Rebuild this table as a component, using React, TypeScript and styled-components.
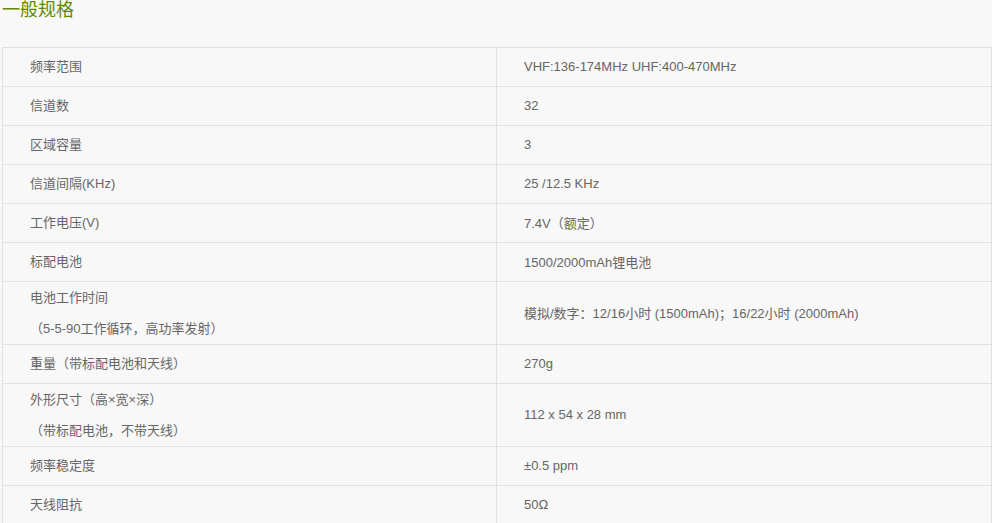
import React from "react";
import styled, { createGlobalStyle } from "styled-components";

const Global = createGlobalStyle`
  html, body { margin: 0; padding: 0; background: #f8f8f8; }
  body { font-family: "Liberation Sans", Arial, "Noto Sans CJK SC", sans-serif; }
`;

const Page = styled.div`
  padding: 0 0 0 2px;
  width: 990px;
  box-sizing: border-box;
`;

const Title = styled.h3`
  margin: 0;
  height: 47px;
  font-size: 18px;
  font-weight: normal;
  line-height: 20px;
  color: #5f8a00;
  font-family: "Liberation Sans", "Noto Sans CJK SC", sans-serif;
`;

const Table = styled.table`
  width: 990px;
  border-collapse: collapse;
  table-layout: fixed;
`;

const Row = styled.tr<{ $tall?: boolean }>`
  height: ${(p) => (p.$tall ? 63 : 39)}px;
`;

const Cell = styled.td<{ $tall?: boolean }>`
  border: 1px solid #e1e1e1;
  padding: 0 0 ${(p) => (p.$tall ? 0 : 2)}px 27px;
  font-size: 13px;
  color: #666;
  vertical-align: middle;
  font-family: "Liberation Sans", "Noto Sans CJK SC", sans-serif;
`;

const Line = styled.div`
  line-height: 31px;
`;

const rows: { k: string[]; v: string }[] = [
  { k: ["频率范围"], v: "VHF:136-174MHz UHF:400-470MHz" },
  { k: ["信道数"], v: "32" },
  { k: ["区域容量"], v: "3" },
  { k: ["信道间隔(KHz)"], v: "25 /12.5 KHz" },
  { k: ["工作电压(V)"], v: "7.4V（额定）" },
  { k: ["标配电池"], v: "1500/2000mAh锂电池" },
  { k: ["电池工作时间", "（5-5-90工作循环，高功率发射）"], v: "模拟/数字：12/16小时 (1500mAh)；16/22小时 (2000mAh)" },
  { k: ["重量（带标配电池和天线）"], v: "270g" },
  { k: ["外形尺寸（高×宽×深）", "（带标配电池，不带天线）"], v: "112 x 54 x 28 mm" },
  { k: ["频率稳定度"], v: "±0.5 ppm" },
  { k: ["天线阻抗"], v: "50Ω" },
];

export default function App() {
  return (
    <Page>
      <Global />
      <Title>一般规格</Title>
      <Table>
        <colgroup>
          <col style={{ width: 494 }} />
          <col />
        </colgroup>
        <tbody>
          {rows.map((r, i) => {
            const tall = r.k.length > 1;
            return (
              <Row key={i} $tall={tall}>
                <Cell $tall={tall}>
                  {r.k.map((t, j) => (
                    <Line key={j}>{t}</Line>
                  ))}
                </Cell>
                <Cell>{r.v}</Cell>
              </Row>
            );
          })}
        </tbody>
      </Table>
    </Page>
  );
}
